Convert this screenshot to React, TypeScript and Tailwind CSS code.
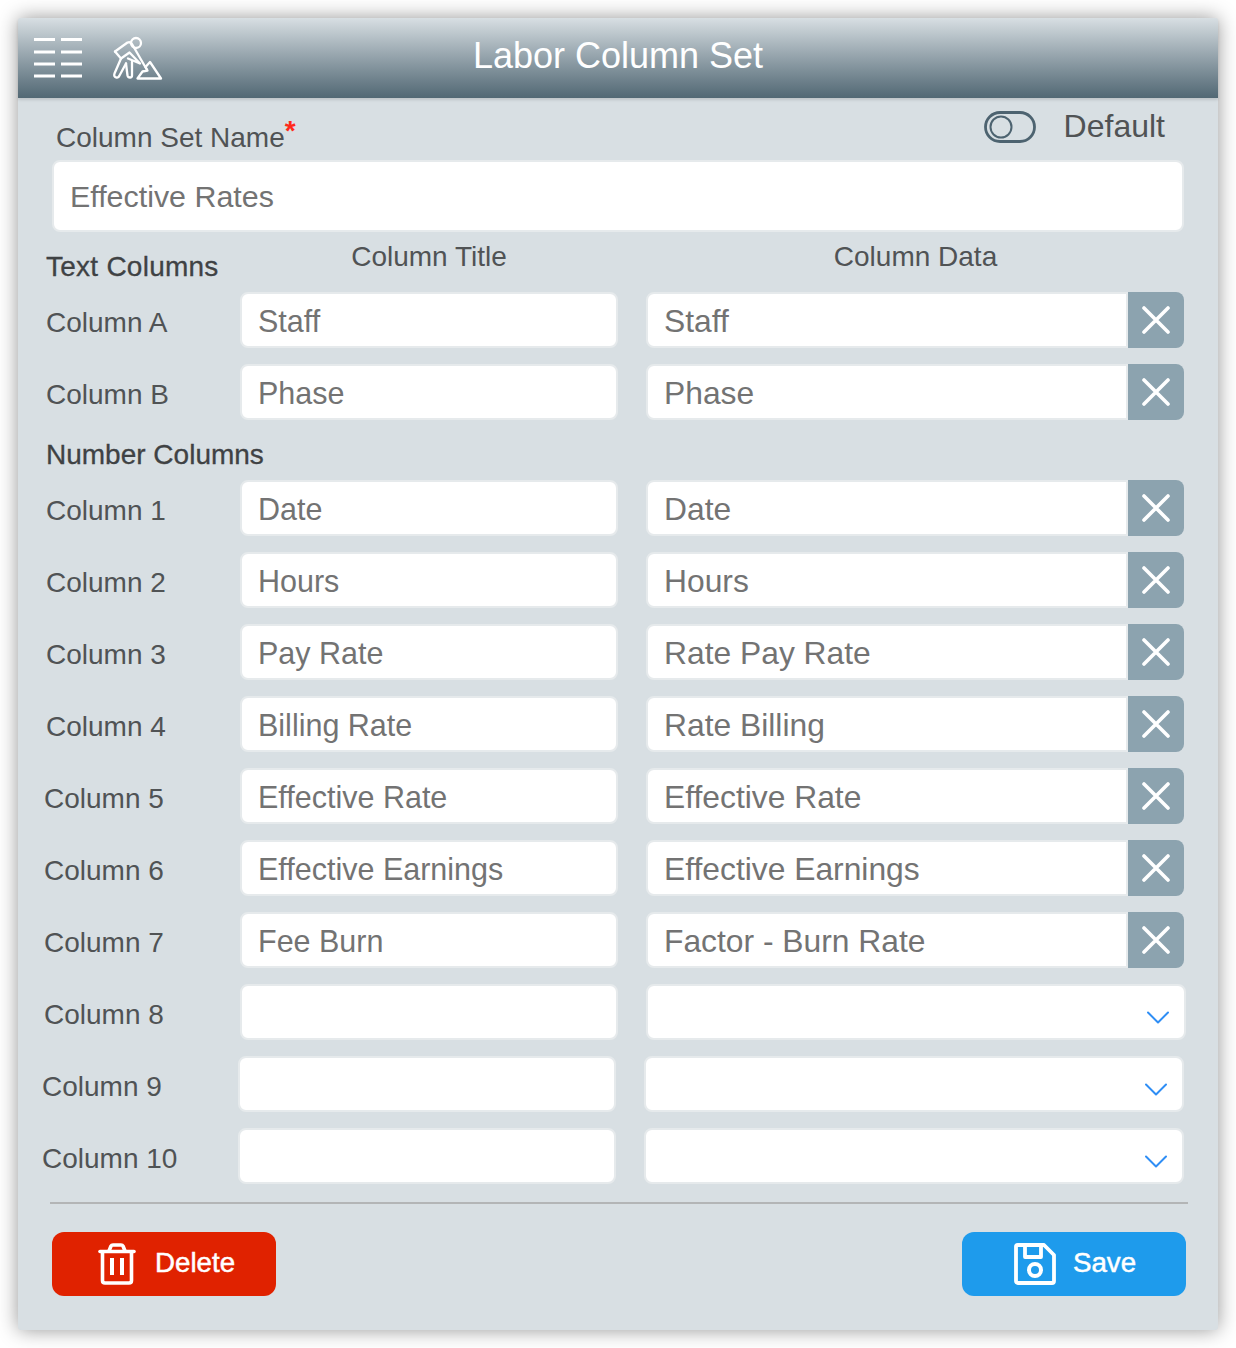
const font = { fontFamily: '"Liberation Sans", Arial, sans-serif' }

const textRows = [
  { label: 'Column A', title: 'Staff', data: 'Staff' },
  { label: 'Column B', title: 'Phase', data: 'Phase' },
]

const numberRows = [
  { label: 'Column 1', title: 'Date', data: 'Date' },
  { label: 'Column 2', title: 'Hours', data: 'Hours' },
  { label: 'Column 3', title: 'Pay Rate', data: 'Rate Pay Rate' },
  { label: 'Column 4', title: 'Billing Rate', data: 'Rate Billing' },
  { label: 'Column 5', title: 'Effective Rate', data: 'Effective Rate', indent: 'pl-[26px]', labelWidth: 'w-[196px]' },
  { label: 'Column 6', title: 'Effective Earnings', data: 'Effective Earnings', indent: 'pl-[26px]', labelWidth: 'w-[196px]' },
  { label: 'Column 7', title: 'Fee Burn', data: 'Factor - Burn Rate', indent: 'pl-[26px]', labelWidth: 'w-[196px]' },
  { label: 'Column 8', title: '', data: '', indent: 'pl-[26px]', labelWidth: 'w-[196px]' },
  { label: 'Column 9', title: '', data: '', indent: 'pl-[24px]', labelWidth: 'w-[196px]' },
  { label: 'Column 10', title: '', data: '', indent: 'pl-[24px]', labelWidth: 'w-[196px]' },
]

function MenuIcon() {
  return (
    <svg width="48" height="40" viewBox="0 0 48 40" fill="#fff">
      {[0, 12.5, 24.5, 36.5].map((y) => (
        <g key={y}>
          <rect x="0" y={y} width="21" height="3" />
          <rect x="27" y={y} width="21" height="3" />
        </g>
      ))}
    </svg>
  )
}

function WorkerIcon() {
  return (
    <svg width="50" height="46" viewBox="0 0 50 46" fill="none" stroke="#fff" strokeWidth="2.3" strokeLinejoin="round" strokeLinecap="round">
      <circle cx="23" cy="7" r="5" />
      <path d="M2 15.5 L14.5 6.5 Q17.5 5.5 19 8 L30 27 L33.5 33" />
      <path d="M2 15.5 L8 22.5 L16.5 16.5 L27 27.5 L15 22.5" />
      <path d="M8 22.5 L1.5 37.5 Q0.5 41 3.5 41.5 Q5.5 42 6.5 39.5 L13 27.5" />
      <path d="M13 27.5 L14.5 39.5 Q15 41.5 17 41.5 Q19 41.5 19 39.5 L19 26" />
      <path d="M37 26 L48 42.5 L24.5 42.5 L29.5 35.5 L34.5 34.5 L32.5 31 Z" />
    </svg>
  )
}

function ToggleIcon() {
  return (
    <svg width="52" height="32" viewBox="0 0 52 32" fill="none" stroke="#4d6370">
      <rect x="1.5" y="1.5" width="49" height="29" rx="14.5" strokeWidth="2.8" />
      <circle cx="17" cy="16" r="10.5" strokeWidth="2" />
    </svg>
  )
}

function CloseIcon() {
  return (
    <svg width="28" height="28" viewBox="0 0 28 28" stroke="#fff" strokeWidth="3.6" strokeLinecap="round">
      <path d="M2 2 L26 26 M26 2 L2 26" />
    </svg>
  )
}

function ChevronIcon() {
  return (
    <svg width="22" height="13" viewBox="0 0 22 13" fill="none" stroke="#2f8ef5" strokeWidth="2" strokeLinecap="round" strokeLinejoin="round">
      <path d="M1 1.5 L11 11.5 L21 1.5" />
    </svg>
  )
}

function TrashIcon() {
  return (
    <svg width="38" height="42" viewBox="0 0 38 42" fill="none" stroke="#fff" strokeWidth="3.6" strokeLinejoin="round" strokeLinecap="round">
      <path d="M2 8.5 H36" />
      <path d="M11 8 L13 3 Q13.5 2 15 2 H23 Q24.5 2 25 3 L27 8" />
      <path d="M4.5 9 V37.5 Q4.5 40 7 40 H31 Q33.5 40 33.5 37.5 V9" />
      <path d="M14 15 V32 M24 15 V32" strokeLinecap="butt" strokeWidth="4" />
    </svg>
  )
}

function SaveIcon() {
  return (
    <svg width="42" height="42" viewBox="0 0 42 42" fill="none" stroke="#fff" strokeWidth="3.8" strokeLinejoin="round">
      <path d="M3.5 2 H30 L40 12 V38 Q40 40 38 40 H4 Q2 40 2 38 V3.5 Q2 2 3.5 2 Z" />
      <path d="M11 2 V14 H27 V2" />
      <circle cx="21" cy="27" r="6" strokeWidth="4" />
    </svg>
  )
}

function TextInput({ value, className }: { value: string; className: string }) {
  return (
    <input
      readOnly
      value={value}
      style={font}
      className={`bg-white border-2 border-[#e6eaec] px-4 font-light text-[#737373] outline-none ${className}`}
    />
  )
}

type RowProps = {
  label: string
  title: string
  data: string
  indent?: string
  labelWidth?: string
}

function ColumnRow({ label, title, data, indent = 'pl-[28px]', labelWidth = 'w-[194px]' }: RowProps) {
  return (
    <div className={`flex h-[56px] items-center ${indent}`}>
      <div className={`${labelWidth} shrink-0 pt-[6px] text-[28px] text-[#505355]`}>{label}</div>
      <TextInput value={title} className="h-full w-[378px] rounded-lg pt-[2px] text-[30.5px]" />
      {data ? (
        <div className="ml-[28px] flex h-full w-[538px]">
          <TextInput value={data} className="h-full min-w-0 flex-1 rounded-l-lg pt-[2px] text-[31.8px]" />
          <button className="flex w-[56px] items-center justify-center rounded-r-lg bg-[#8ca3af]">
            <CloseIcon />
          </button>
        </div>
      ) : (
        <div className="ml-[28px] flex h-full w-[540px] items-end justify-end rounded-lg border-2 border-[#e6eaec] bg-white pb-[14px] pr-[15px]">
          <ChevronIcon />
        </div>
      )}
    </div>
  )
}

export default function App() {
  return (
    <div style={font} className="h-[1348px] w-[1236px] overflow-hidden bg-white p-[18px]">
      <div className="flex h-[1312px] w-[1200px] flex-col rounded-[3px] bg-[#d8dfe3] shadow-[0_0_20px_rgba(0,0,0,0.42)]">
        <header className="relative flex h-[80px] shrink-0 items-center rounded-t-[3px] bg-gradient-to-b from-[#d8dfe3] to-[#526874] pl-4 shadow-[0_2px_3px_rgba(0,0,0,0.12)]">
          <MenuIcon />
          <div className="ml-[31px] mt-[2px]">
            <WorkerIcon />
          </div>
          <h1 className="absolute inset-x-0 pb-[4px] text-center text-[36px] font-light text-white">Labor Column Set</h1>
        </header>

        <div className="flex h-[62px] shrink-0 items-start justify-between pl-[38px] pr-[53px]">
          <div className="mt-[19px] text-[28px] text-[#505355]">
            Column Set Name<span className="relative -top-[7px] font-bold text-[#ff2a1a]">*</span>
          </div>
          <div className="mt-[6px] flex items-center gap-[28px]">
            <ToggleIcon />
            <span className="-mt-[2px] text-[32px] text-[#505355]">Default</span>
          </div>
        </div>

        <div className="ml-[34px] w-[1132px]">
          <TextInput value="Effective Rates" className="h-[72px] w-full rounded-lg text-[30.4px]" />
        </div>

        <div className="flex h-[60px] shrink-0 pl-[28px]">
          <div className="mt-[14px] w-[194px] text-[28px] tracking-[0.25px] text-[#3f4244] [-webkit-text-stroke:0.3px]">Text Columns</div>
          <div className="mt-[4px] w-[378px] text-center text-[28px] text-[#505355]">Column Title</div>
          <div className="ml-[28px] mt-[4px] w-[539px] text-center text-[28px] text-[#505355]">Column Data</div>
        </div>

        <div className="flex flex-col gap-4">
          {textRows.map((row) => (
            <ColumnRow key={row.label} {...row} />
          ))}
        </div>

        <div className="flex h-[60px] shrink-0 items-end pb-[4px] pl-[28px] text-[28px] text-[#3f4244] [-webkit-text-stroke:0.3px]">Number Columns</div>

        <div className="flex flex-col gap-4">
          {numberRows.map((row) => (
            <ColumnRow key={row.label} {...row} />
          ))}
        </div>

        <div className="ml-[32px] mt-[18px] h-[2px] w-[1138px] bg-[#b3b5b6]" />

        <div className="mt-[28px] flex justify-between pl-[34px] pr-[32px]">
          <button className="flex h-[64px] w-[224px] items-center gap-[19px] rounded-xl bg-[#e02200] pl-[46px] text-[27.7px] text-white [-webkit-text-stroke:0.5px]">
            <TrashIcon />
            <span className="pb-[3px]">Delete</span>
          </button>
          <button className="flex h-[64px] w-[224px] items-center gap-[17px] rounded-xl bg-[#1e9bec] pl-[52px] text-[27.7px] text-white [-webkit-text-stroke:0.5px]">
            <SaveIcon />
            <span className="pb-[3px]">Save</span>
          </button>
        </div>
      </div>
    </div>
  )
}
